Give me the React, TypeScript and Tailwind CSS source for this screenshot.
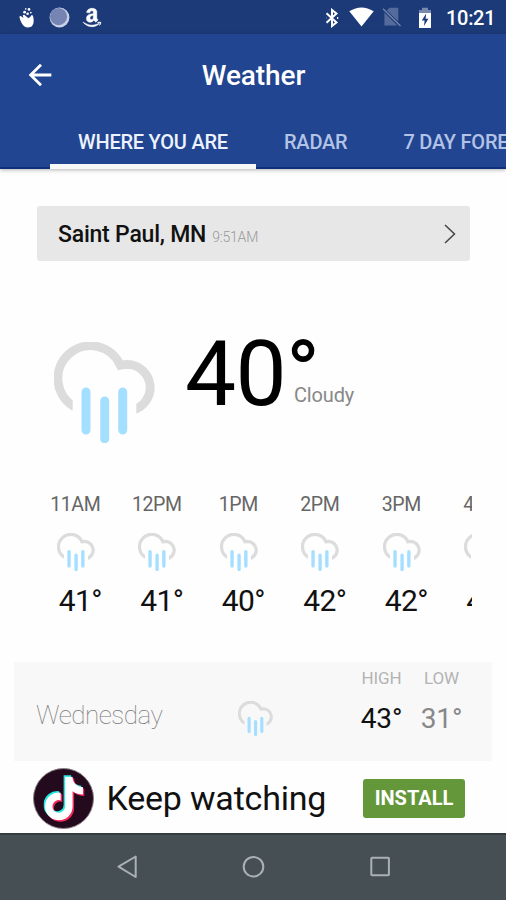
import React from "react";
import { FaAmazon, FaTiktok } from "react-icons/fa";
import { MdArrowBack } from "react-icons/md";

const hours = [
  { time: "11AM", temp: "41°" },
  { time: "12PM", temp: "41°" },
  { time: "1PM", temp: "40°" },
  { time: "2PM", temp: "42°" },
  { time: "3PM", temp: "42°" },
  { time: "4PM", temp: "42°" },
];

function RainCloud({ className }: { className: string }) {
  const clipId = React.useId();
  return (
    <svg viewBox="54 342 101 101" className={className} fill="none">
      {/* The cloud outline ends in vertical cuts on both sides of the rain. */}
      <clipPath id={clipId}>
        <path d="M50 338H160V450H136.3V390H72.7V450H50Z" />
      </clipPath>
      <path
        clipPath={`url(#${clipId})`}
        d="M74.5 406.8A32.6 32.6 0 1 1 120.3 365.2Q123.5 364.4 127.5 364.4A23.2 23.2 0 0 1 133 410"
        stroke="#dcdcdc"
        strokeWidth="8.8"
      />
      <path
        d="M86 392V430M104.7 401V438.7M122.7 392V430"
        stroke="#a5dfff"
        strokeWidth="9"
        strokeLinecap="round"
      />
    </svg>
  );
}

function StatusBar() {
  return (
    <div className="flex h-[34px] shrink-0 items-center bg-[#1c3a78] pl-[18px] text-white">
      <svg viewBox="0 0 18 22" className="h-[22px] w-[18px]" fill="#fff">
        <path d="M1.5 11.2C1.4 10 2.6 9.6 3.6 10.6L5.4 12L4.8 9.6C5.2 8.4 6.6 8.6 7.4 9.8L10.4 12.2L12.6 10.6C13 8.8 15 9 15.2 10.8C15.8 14 16.2 17 14.4 19.4C12.6 21.8 8.6 22 6.2 20.2C4.4 18.8 2.2 14.6 1.5 11.2Z" />
        <circle cx="6.6" cy="6.2" r="1.4" />
        <circle cx="11" cy="3.4" r="1.3" />
        <circle cx="9.6" cy="7.8" r="1.3" />
        <circle cx="7.8" cy="2.9" r="0.8" />
        <circle cx="12.8" cy="6.6" r="0.9" />
      </svg>
      <svg viewBox="0 0 22 22" className="ml-[13px] mt-px h-[21px] w-[21px]">
        <circle cx="11" cy="11" r="10.4" fill="#c9d2e6" />
        <circle cx="10" cy="10" r="9" fill="#7684b4" />
      </svg>
      <FaAmazon className="ml-[12px] mt-px h-[21px] w-[20px]" stroke="currentColor" strokeWidth="12" />
      <svg
        viewBox="0 0 14 20"
        className="ml-[223px] mt-px h-[20px] w-[14px]"
        fill="none"
        stroke="currentColor"
        strokeWidth="2"
      >
        <path d="M1.5 5.2L11.5 14.4L7 18V2L11.5 5.6L1.5 14.8" />
        <path d="M1 10H1.2M12 10H13.2" strokeWidth="2.2" />
      </svg>
      <svg viewBox="0 0 25 20" className="ml-[10px] h-[20px] w-[25px]" fill="#fff">
        <path d="M0.3 4.2Q12.5 -3.4 24.7 4.2L12.5 19.6Z" />
      </svg>
      <svg viewBox="0 0 20 20" className="ml-[8px] h-[20px] w-[20px]">
        <path d="M7.4 0.8H16.3V14.4L4.8 3.4ZM2.4 5.4L15.4 18.4H2.4Z" fill="#546b9b" />
        <path d="M1 1.8L18.5 19" stroke="#7889ad" strokeWidth="1.3" />
      </svg>
      <svg viewBox="0 0 14 22" className="ml-[16px] mt-px h-[22px] w-[14px]">
        <path d="M4 0.8H10V3H13V8H1V3H4Z" fill="#7889ad" />
        <path d="M1 6H13V21H1Z" fill="#fff" />
        <path d="M8.2 6.5L3.8 13.6H6.6L6 19L10.4 11.8H7.6Z" fill="#1c3a78" />
      </svg>
      <span className="ml-[14px] mt-[2px] text-[20px] font-medium leading-[34px] tracking-[-0.3px]">10:21</span>
    </div>
  );
}

function Header() {
  return (
    <header className="h-[135px] shrink-0 bg-[#214591] shadow-[0_1px_4px_rgba(0,0,0,0.3)]">
      <div className="grid h-[80px] grid-cols-[80px_1fr_80px] items-center">
        <MdArrowBack className="-mt-[2px] ml-[23px] h-[34px] w-[34px] text-white" />
        <h1 className="pl-px pt-px text-center text-[28px] font-medium leading-[82px] tracking-[-0.1px] text-white">
          Weather
        </h1>
      </div>
      <nav className="flex h-[55px] overflow-hidden whitespace-nowrap border-b-2 border-[#0f2f7c] pl-[50px] text-[20px] font-medium leading-[56px] tracking-[-0.23px]">
        <span className="w-[206px] shrink-0 text-center text-[#eef2fc]">WHERE YOU ARE</span>
        <span className="ml-[28px] text-[#b3c3e6]">RADAR</span>
        <span className="ml-[56px] text-[#b3c3e6]">7 DAY FORECAST</span>
      </nav>
      <div className="relative -top-[5px] ml-[50px] h-[5px] w-[206px] bg-[#f8f8f8]" />
    </header>
  );
}

function Hourly() {
  return (
    <div className="ml-[35px] mt-[46px] flex h-[132px] w-[437px] shrink-0 overflow-hidden">
      {hours.map((h) => (
        <div key={h.time} className="flex w-[81.5px] shrink-0 flex-col items-center">
          <span className="-ml-px mt-[2px] text-[19.5px] leading-[28px] tracking-[-0.4px] text-[#666]">{h.time}</span>
          <RainCloud className="mt-[14px] h-[38px] w-[38px]" />
          <span className="ml-[9px] mt-[11px] text-[30px] leading-[38px] tracking-[-0.6px] text-[#111]">
            {h.temp}
          </span>
        </div>
      ))}
    </div>
  );
}

function DayCard() {
  return (
    <div className="mx-[14px] mt-[41px] flex h-[99px] shrink-0 bg-[#f8f8f8]">
      <span className="mt-[36px] w-[224px] pl-[22px] text-[26px] font-thin leading-[34px] tracking-[-0.5px] text-[#777]">
        Wednesday
      </span>
      <RainCloud className="mt-[39px] h-[35px] w-[35px]" />
      <div className="ml-[75px] w-[66px] text-center">
        <div className="pl-px text-[17px] leading-[33px] tracking-[-0.1px] text-[#b3b3b3]">HIGH</div>
        <div className="mt-[7px] pl-px text-[28px] leading-[34px] tracking-[-0.2px] text-[#111]">43°</div>
      </div>
      <div className="w-[54px] text-center">
        <div className="pl-px text-[17px] leading-[33px] tracking-[-0.1px] text-[#b3b3b3]">LOW</div>
        <div className="mt-[7px] pl-px text-[28px] leading-[34px] tracking-[-0.2px] text-[#888]">31°</div>
      </div>
    </div>
  );
}

function AdBanner() {
  return (
    <div className="flex h-[72px] shrink-0 items-center pt-[2px]">
      <div className="ml-[33px] grid h-[61px] w-[61px] place-items-center rounded-full border border-[#8a8088] bg-[#240a1d]">
        <div className="grid place-items-center">
          <FaTiktok className="z-0 col-start-1 row-start-1 h-[44px] w-[38px] -translate-x-[1.5px] -translate-y-[1px] text-[#25e8e4]" />
          <FaTiktok className="z-10 col-start-1 row-start-1 h-[44px] w-[38px] translate-x-[1.5px] translate-y-[2px] text-[#f5275a]" />
          <FaTiktok className="z-20 col-start-1 row-start-1 h-[44px] w-[38px] translate-y-[0.5px] text-white" />
        </div>
      </div>
      <span className="-mt-px ml-[12.5px] w-[256.5px] whitespace-nowrap text-[34px] leading-[60px] tracking-[-0.2px] text-[#111]">
        Keep watching
      </span>
      <button className="h-[39px] w-[102px] rounded-[3px] bg-[#64973a] text-[20px] font-bold leading-[38px] text-white">
        INSTALL
      </button>
    </div>
  );
}

function NavBar() {
  return (
    <div className="flex h-[67px] shrink-0 items-center border-t-2 border-[#353c40] bg-[#464f54] text-[#a9b1b3]">
      <svg viewBox="0 0 506 65" className="h-[65px] w-[506px]" fill="none" stroke="currentColor" strokeWidth="2">
        <path d="M135.7 21.5V42L118.5 31.7Z" strokeLinejoin="round" />
        <circle cx="253.5" cy="31.7" r="9.8" />
        <rect x="371.3" y="22.7" width="17.6" height="17.6" rx="0.8" />
      </svg>
    </div>
  );
}

export default function App() {
  return (
    <div className="flex h-[900px] w-[506px] flex-col overflow-hidden bg-[#fefefe] font-['Roboto',sans-serif]">
      <StatusBar />
      <Header />
      <div className="ml-[37px] mt-[37px] flex h-[55px] w-[433px] shrink-0 items-center rounded-[3px] bg-[#e7e7e7] pl-[21px]">
        <span className="pt-px text-[23px] font-medium leading-[55px] tracking-[-0.22px] text-[#111]">Saint Paul, MN</span>
        <span className="ml-[6px] mt-[6px] text-[14px] font-light leading-[20px] tracking-[-0.2px] text-[#999]">9:51AM</span>
        <svg viewBox="0 0 12 20" className="ml-auto mr-[14px] mt-px h-[20px] w-[12px]" fill="none" stroke="#444" strokeWidth="1.5">
          <path d="M1 1L10.5 10L1 19" />
        </svg>
      </div>
      <div className="ml-[54px] mt-[61px] flex h-[121px] shrink-0">
        <RainCloud className="mt-[20px] h-[101px] w-[101px]" />
        <span className="ml-[30px] mt-[7px] w-[109px] text-[91px] leading-[91px] tracking-[-0.7px] text-black">40°</span>
        <span className="mt-[60px] text-[20px] leading-[26px] tracking-[-0.15px] text-[#888]">Cloudy</span>
      </div>
      <Hourly />
      <DayCard />
      <AdBanner />
      <NavBar />
    </div>
  );
}
